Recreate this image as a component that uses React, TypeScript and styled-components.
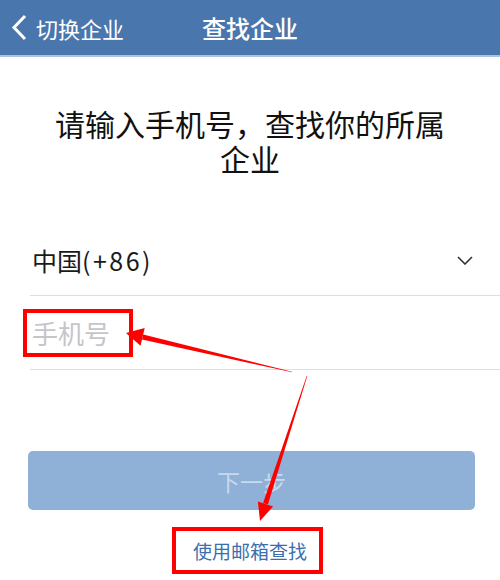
import React from 'react';
import styled, { createGlobalStyle } from 'styled-components';

const GlobalStyle = createGlobalStyle`
  html, body {
    margin: 0;
    padding: 0;
    background: #ffffff;
  }
  body {
    font-family: "Noto Sans CJK SC", "Noto Sans", sans-serif;
  }
`;

// page shell
const Page = styled.div`
  position: relative;
  width: 500px;
  height: 580px;
  overflow: hidden;
  background: #ffffff;
`;

const Header = styled.header`
  display: grid;
  grid-template-columns: 1fr auto 1fr;
  align-items: center;
  height: 55px;
  background: #4a76ae;
  border-bottom: 2px solid #aac3e2;
  color: #ffffff;
`;

const BackButton = styled.div`
  display: flex;
  align-items: center;
  gap: 9px;
  padding-left: 11px;
  font-size: 22px;
  line-height: 1;
`;

const Title = styled.h1`
  margin: 0;
  font-size: 24px;
  font-weight: 500;
  line-height: 1;
`;

const Heading = styled.h2`
  margin: 49px 0 0;
  padding: 0 52px;
  text-align: center;
  font-size: 30px;
  font-weight: 400;
  line-height: 35px;
  color: #111111;
`;

// form rows
const Form = styled.div`
  margin: 49px 0 0 30px;
`;

const FieldRow = styled.div<{ $height: number }>`
  display: flex;
  align-items: center;
  justify-content: space-between;
  height: ${(p) => p.$height}px;
  padding: 0 27px 0 2px;
  border-bottom: 1px solid #dedede;
  box-sizing: border-box;
  font-size: 25px;
`;

const CountryText = styled.span`
  color: #1a1a1a;
`;

const CountryCode = styled.span`
  letter-spacing: 2.5px;
`;

const Placeholder = styled.span`
  color: #c5c5ca;
  font-size: 26px;
`;

// red annotation frame drawn around a part
const Highlight = styled.span<{ $l: number; $r: number; $t: number; $b: number }>`
  position: relative;
  display: inline-block;
  line-height: 1;

  &::after {
    content: '';
    position: absolute;
    top: -${(p) => p.$t}px;
    bottom: -${(p) => p.$b}px;
    left: -${(p) => p.$l}px;
    right: -${(p) => p.$r}px;
    border: 4px solid #ff0000;
    pointer-events: none;
  }
`;

const NextButton = styled.button`
  display: block;
  width: 447px;
  height: 59px;
  margin: 81px 0 0 28px;
  border: none;
  border-radius: 5px;
  background: #8fb1d7;
  color: #c9d9ec;
  font-family: inherit;
  font-size: 23px;
`;

const LinkWrap = styled.div`
  display: flex;
  justify-content: center;
  margin-top: 31px;
`;

const EmailLink = styled.a`
  font-size: 19px;
  line-height: 1;
  color: #3c6eae;
  text-decoration: none;
`;

const Annotations = styled.svg`
  position: absolute;
  left: 0;
  top: 0;
  pointer-events: none;
`;

const App: React.FC = () => {
  return (
    <>
      <GlobalStyle />
      <Page>
        <Header>
          <BackButton>
            <svg width="16" height="27" viewBox="0 0 16 27">
              <polyline points="14,2 3,13.5 14,25" fill="none" stroke="#ffffff" strokeWidth="3" />
            </svg>
            切换企业
          </BackButton>
          <Title>查找企业</Title>
          <span />
        </Header>

        <Heading>请输入手机号，查找你的所属企业</Heading>

        <Form>
          <FieldRow $height={71}>
            <CountryText>
              中国<CountryCode>(+86)</CountryCode>
            </CountryText>
            <svg width="16" height="9" viewBox="0 0 16 9">
              <polyline points="1,1 8,8 15,1" fill="none" stroke="#333333" strokeWidth="1.6" />
            </svg>
          </FieldRow>
          <FieldRow $height={74}>
            <Highlight $l={9} $r={23} $t={11} $b={11}>
              <Placeholder>手机号</Placeholder>
            </Highlight>
          </FieldRow>
        </Form>

        <NextButton>下一步</NextButton>

        <LinkWrap>
          <Highlight $l={21} $r={16} $t={14} $b={14}>
            <EmailLink>使用邮箱查找</EmailLink>
          </Highlight>
        </LinkWrap>

        <Annotations width="500" height="580" viewBox="0 0 500 580">
          <polygon points="292.1,372.3 291.9,371.7 143.2,334.6 142.0,339.4" fill="#ff0000" />
          <polygon points="126,333 144.7,328.1 140.5,345.7" fill="#ff0000" />
          <polygon points="307.3,376.1 306.7,375.9 263.1,503.1 267.9,504.6" fill="#ff0000" />
          <polygon points="260,521 273.1,506.4 257.9,501.4" fill="#ff0000" />
        </Annotations>
      </Page>
    </>
  );
};

export default App;
